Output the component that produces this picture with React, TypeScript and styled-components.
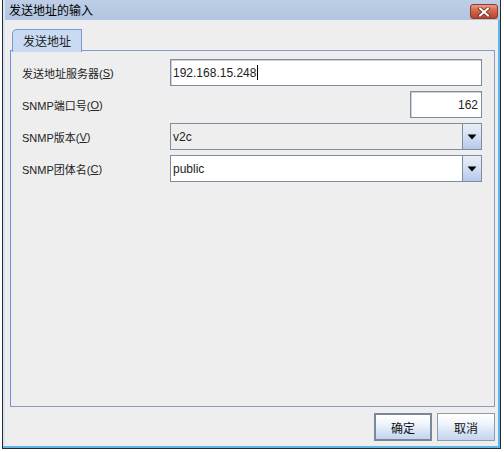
import React from "react";
import styled, { createGlobalStyle } from "styled-components";

const Global = createGlobalStyle`
  html, body { margin: 0; padding: 0; background: #ffffff; }
  body {
    font-family: "Liberation Sans", "Noto Sans CJK SC", sans-serif;
    font-size: 12px;
    color: #000;
  }
  * { box-sizing: border-box; }
`;

const Window = styled.div`
  margin-left: 2px;
  width: 499px;
  height: 449px;
  border: 1px solid #2a2a2a;
  border-top: none;
  display: flex;
  flex-direction: column;
  background: #eeeeee;
`;

const TitleBar = styled.div`
  height: 20px;
  flex: none;
  display: flex;
  align-items: center;
  justify-content: space-between;
  padding: 0 2px 0 6px;
  background-color: #c7d6eb;
  background-image: radial-gradient(rgba(110, 140, 190, 0.35) 0.5px, transparent 0.9px),
    linear-gradient(#cfdcef, #bfd0e8);
  background-size: 2px 2px, 100% 100%;
  box-shadow: inset 2px 0 0 #d9e5f4;
`;

const TitleText = styled.span`
  font-family: "Noto Sans CJK SC", sans-serif;
  font-size: 12px;
  line-height: 20px;
  color: #000;
`;

const CloseButton = styled.div`
  width: 28px;
  height: 15px;
  margin-top: 3px;
  border: 1px solid #8c3b2b;
  border-radius: 3px;
  background: linear-gradient(#e89a86 0%, #d4654b 45%, #b9442d 100%);
  display: flex;
  align-items: center;
  justify-content: center;
`;

const Body = styled.div`
  flex: 1;
  display: flex;
  flex-direction: column;
  padding: 9px 5px 7px 7px;
  box-shadow: inset -2px -2px 0 #5cb6e8, inset 2px 0 0 #d6e4f5;
`;

const TabStrip = styled.div`
  display: flex;
  height: 22px;
  flex: none;
  padding-left: 2px;
  position: relative;
  z-index: 1;
  margin-bottom: -1px;
`;

const Tab = styled.div`
  height: 23px;
  padding: 0 10px;
  background: #c9daf3;
  border: 1px solid #7b9ad2;
  border-bottom: none;
  border-top-left-radius: 5px;
  font-family: "Noto Sans CJK SC", sans-serif;
  font-size: 12px;
  line-height: 21px;
  color: #222;
`;

const Panel = styled.div`
  flex: 1;
  border: 1px solid #8a9bbc;
  border-top-color: #7f9ccc;
  border-left-color: #6d90d8;
  padding: 8px 12px 0 11px;
`;

const FormGrid = styled.div`
  display: grid;
  grid-template-columns: 148px 1fr;
  grid-auto-rows: 27px;
  row-gap: 5px;
`;

const Label = styled.div`
  display: flex;
  align-items: center;
  font-family: "Liberation Sans", "Noto Sans CJK SC", sans-serif;
  font-size: 11px;
  color: #222;
`;

const Mnemonic = styled.span`
  text-decoration: underline;
`;

const TextField = styled.div<{ $width?: number; $align?: string }>`
  height: 27px;
  width: ${(p) => (p.$width ? `${p.$width}px` : "auto")};
  justify-self: ${(p) => (p.$width ? "end" : "stretch")};
  background: #ffffff;
  border: 1px solid #7d8ca0;
  box-shadow: inset 1px 1px 0 #c9d0da;
  display: flex;
  align-items: center;
  justify-content: ${(p) => (p.$align === "right" ? "flex-end" : "flex-start")};
  padding: 0 3px 0 2px;
  font-family: "Liberation Sans", sans-serif;
  font-size: 12px;
  color: #222;
`;

const Caret = styled.span`
  display: inline-block;
  width: 1px;
  height: 15px;
  background: #000;
  margin-left: 1px;
`;

const Combo = styled.div<{ $editable?: boolean }>`
  height: 27px;
  display: flex;
  border: 1px solid #7d8ca0;
  background: ${(p) => (p.$editable ? "#ffffff" : "#eeeeee")};
`;

const ComboValue = styled.div`
  flex: 1;
  display: flex;
  align-items: center;
  padding-left: 2px;
  font-family: "Liberation Sans", sans-serif;
  font-size: 12px;
  color: #222;
`;

const ArrowButton = styled.div`
  width: 19px;
  border-left: 1px solid #7d8ca0;
  display: flex;
  align-items: center;
  justify-content: center;
  background-image: radial-gradient(rgba(120, 150, 200, 0.3) 0.5px, transparent 0.9px),
    linear-gradient(#fbfcfe 0%, #e6eef9 45%, #bed2ee 100%);
  background-size: 2px 2px, 100% 100%;
`;

const ButtonRow = styled.div`
  display: flex;
  justify-content: flex-end;
  gap: 5px;
  margin-top: 6px;
  flex: none;
`;

const Button = styled.div<{ $default?: boolean }>`
  width: 58px;
  height: 28px;
  display: flex;
  align-items: center;
  justify-content: center;
  border: ${(p) => (p.$default ? "2px solid #7a8799" : "1px solid #8d9bb0")};
  background: linear-gradient(#ffffff 0%, #f1f5fc 35%, #d6e3f5 70%, #c2d5ef 100%);
  font-family: "Noto Sans CJK SC", sans-serif;
  font-size: 12px;
  color: #111;
`;

const DownArrow = () => (
  <svg width="10" height="6" viewBox="0 0 10 6">
    <polygon points="0.5,0.5 9.5,0.5 5,5.5" fill="#000" />
  </svg>
);

const CloseGlyph = () => (
  <svg width="14" height="10" viewBox="0 0 14 10">
    <path d="M3 1.5 L11 8.5 M11 1.5 L3 8.5" stroke="#6a2a20" strokeWidth="3.6" strokeLinecap="square" />
    <path d="M3 1.5 L11 8.5 M11 1.5 L3 8.5" stroke="#ffffff" strokeWidth="2" strokeLinecap="square" />
  </svg>
);

export default function App() {
  return (
    <>
      <Global />
      <Window>
        <TitleBar>
          <TitleText>发送地址的输入</TitleText>
          <CloseButton>
            <CloseGlyph />
          </CloseButton>
        </TitleBar>
        <Body>
          <TabStrip>
            <Tab>发送地址</Tab>
          </TabStrip>
          <Panel>
            <FormGrid>
              <Label>
                发送地址服务器(<Mnemonic>S</Mnemonic>)
              </Label>
              <TextField>
                192.168.15.248
                <Caret />
              </TextField>

              <Label>
                SNMP端口号(<Mnemonic>O</Mnemonic>)
              </Label>
              <TextField $width={72} $align="right">
                162
              </TextField>

              <Label>
                SNMP版本(<Mnemonic>V</Mnemonic>)
              </Label>
              <Combo>
                <ComboValue>v2c</ComboValue>
                <ArrowButton>
                  <DownArrow />
                </ArrowButton>
              </Combo>

              <Label>
                SNMP团体名(<Mnemonic>C</Mnemonic>)
              </Label>
              <Combo $editable>
                <ComboValue>public</ComboValue>
                <ArrowButton>
                  <DownArrow />
                </ArrowButton>
              </Combo>
            </FormGrid>
          </Panel>
          <ButtonRow>
            <Button $default>确定</Button>
            <Button>取消</Button>
          </ButtonRow>
        </Body>
      </Window>
    </>
  );
}
